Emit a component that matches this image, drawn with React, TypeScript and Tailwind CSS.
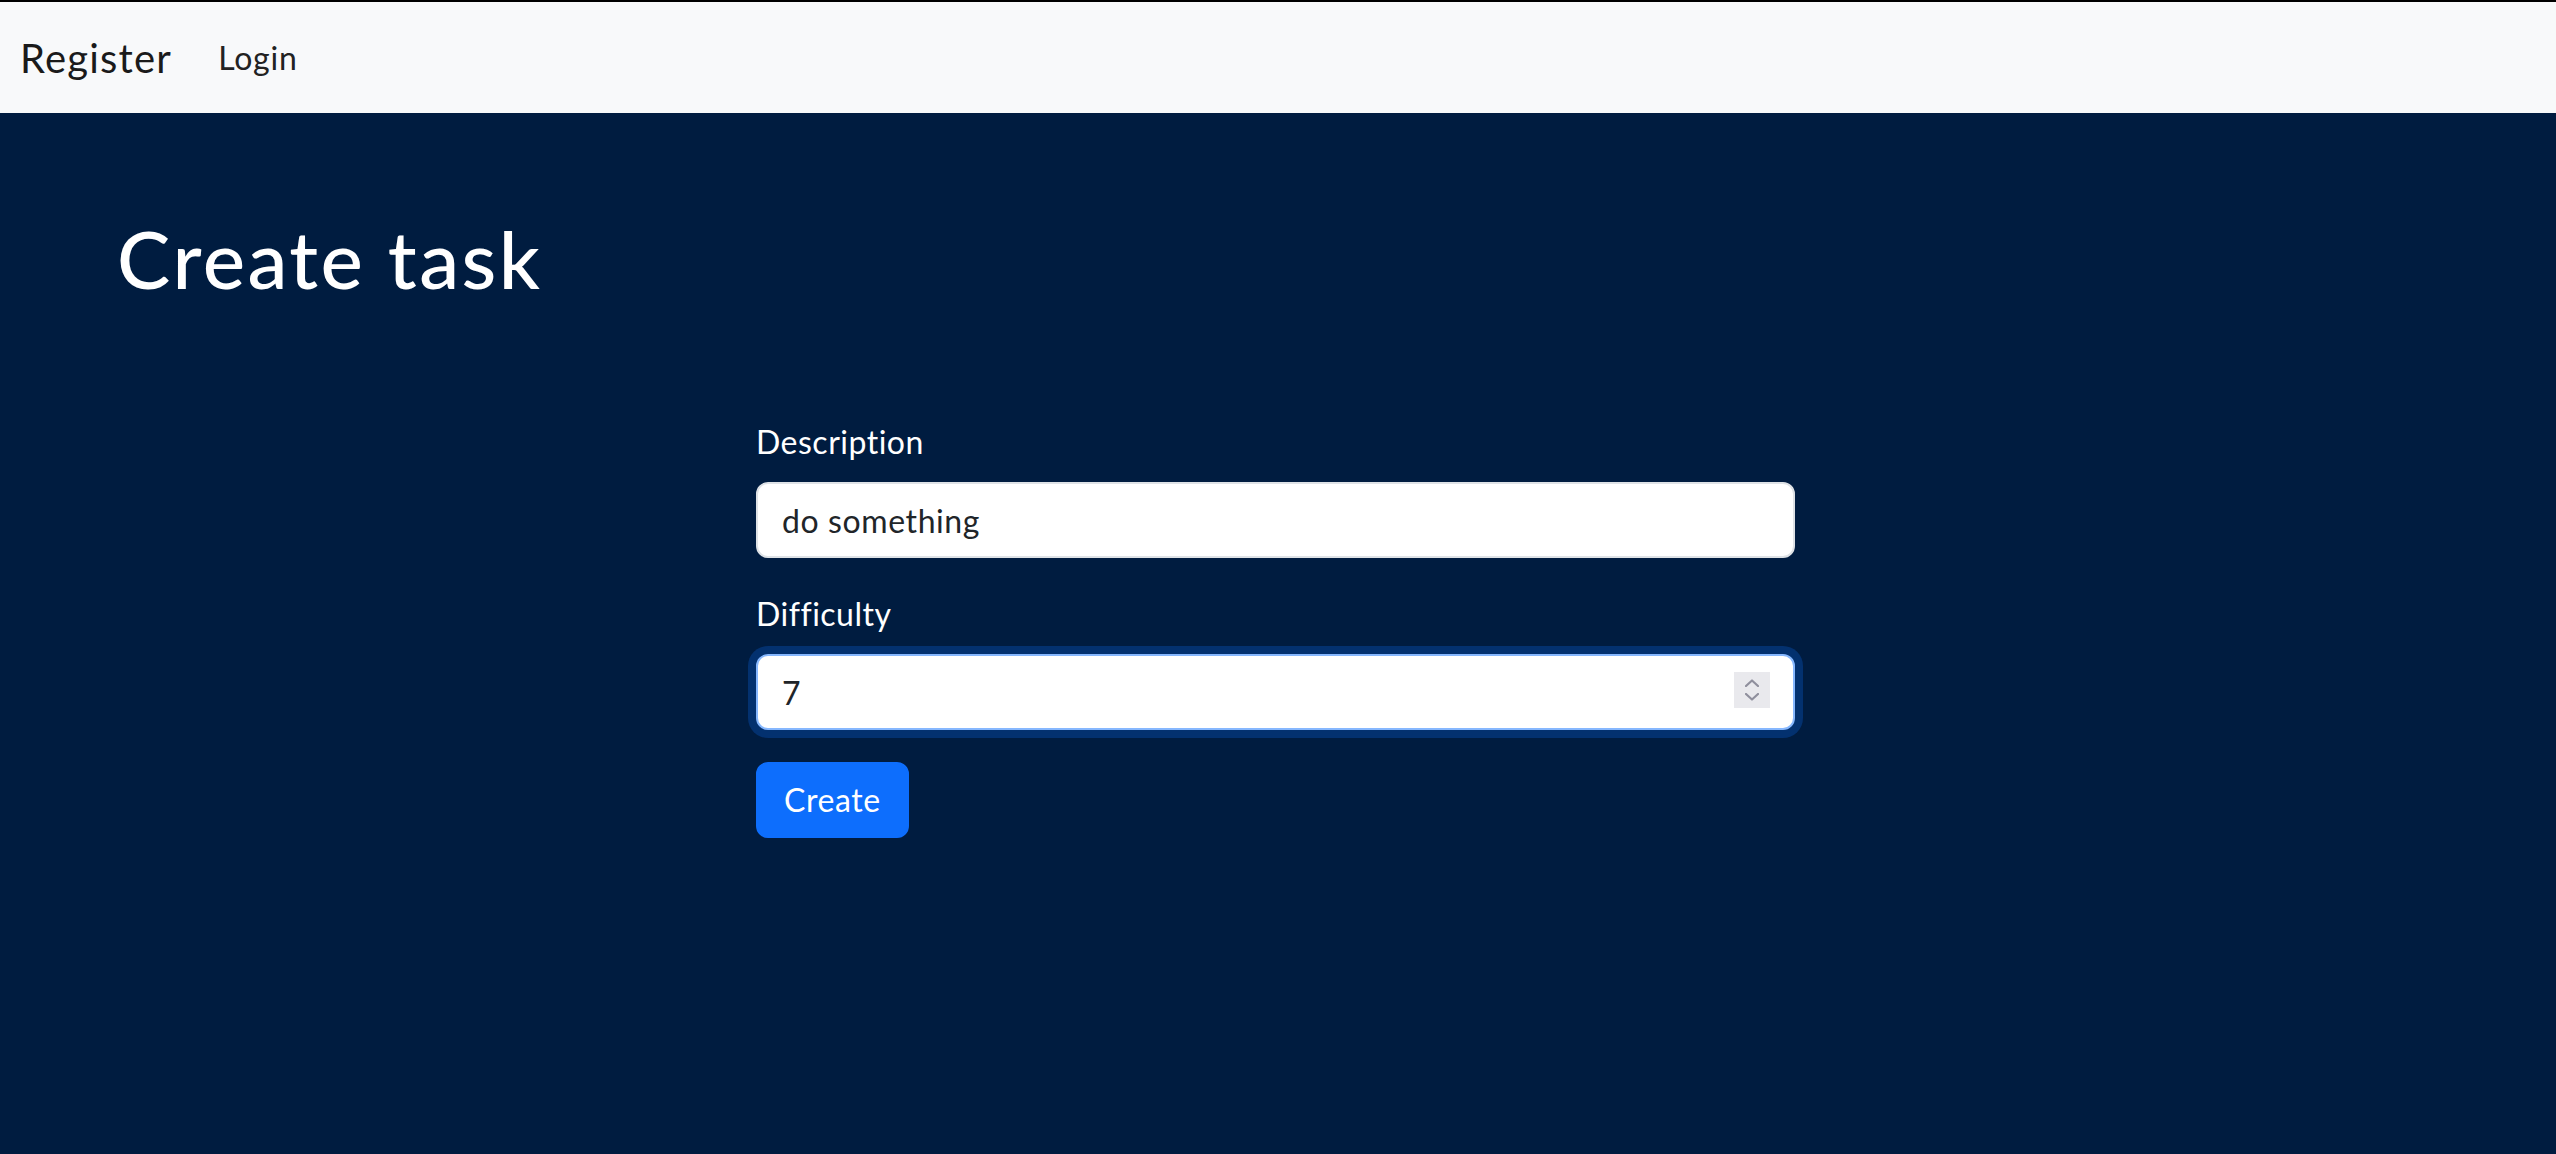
import { useState } from "react";

function NumberSpinner() {
  return (
    <div className="absolute right-[25px] top-[18px] flex h-[36px] w-[36px] flex-col items-center justify-center gap-[6px] bg-[#e9e9ed]">
      <svg width="14" height="8" viewBox="0 0 14 8" fill="none">
        <path d="M1 7 L7 1.5 L13 7" stroke="#8f8f9d" strokeWidth="2.2" strokeLinecap="round" strokeLinejoin="round" />
      </svg>
      <svg width="14" height="8" viewBox="0 0 14 8" fill="none">
        <path d="M1 1 L7 6.5 L13 1" stroke="#8f8f9d" strokeWidth="2.2" strokeLinecap="round" strokeLinejoin="round" />
      </svg>
    </div>
  );
}

export default function App() {
  const [description, setDescription] = useState("do something");
  const [difficulty, setDifficulty] = useState("7");

  return (
    <div className="min-h-screen w-full bg-[#001c40] font-['Lato','Noto_Sans',sans-serif]">
      <nav className="flex h-[113px] items-center border-t-2 border-black bg-[#f8f9fa] px-[20px]">
        <a className="text-[40px] leading-[60px] tracking-[1.2px] text-[#1a1a1a]">Register</a>
        <a className="ml-[46px] text-[32px] leading-[48px] tracking-[0.8px] text-[#222]">Login</a>
      </nav>

      <main className="pl-[117px] pt-[97px]">
        <h1 className="text-[80px] font-medium leading-[96px] tracking-[2.4px] text-white">Create task</h1>

        <form
          className="ml-[639px] mt-[112px] w-[1039px]"
          onSubmit={(e) => e.preventDefault()}
        >
          <div className="mb-[32px]">
            <label className="mb-[16px] block text-[32px] leading-[48px] tracking-[0.5px] text-white">Description</label>
            <input
              value={description}
              onChange={(e) => setDescription(e.target.value)}
              className="h-[76px] w-full rounded-[12px] border-2 border-[#dee2e6] bg-white px-[24px] text-[32px] tracking-[0.6px] text-[#212529] outline-none"
            />
          </div>

          <div className="mb-[32px]">
            <label className="mb-[16px] block text-[32px] leading-[48px] tracking-[0.5px] text-white">Difficulty</label>
            <div className="relative">
              <input
                value={difficulty}
                onChange={(e) => setDifficulty(e.target.value)}
                className="h-[76px] w-full rounded-[12px] border-2 border-[#86b7fe] bg-white px-[24px] text-[32px] text-[#212529] shadow-[0_0_0_8px_rgba(13,110,253,0.25)] outline-none"
              />
              <NumberSpinner />
            </div>
          </div>

          <button
            type="submit"
            className="h-[76px] rounded-[12px] border-2 border-[#0d6efd] bg-[#0d6efd] px-[26px] text-[32px] tracking-[0.6px] text-white"
          >
            Create
          </button>
        </form>
      </main>
    </div>
  );
}
